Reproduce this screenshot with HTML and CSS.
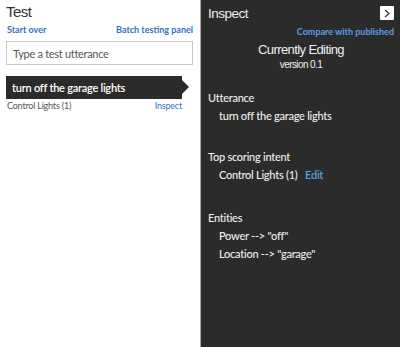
FILE: index.html
```html
<!DOCTYPE html>
<html>
<head>
    <meta charset="UTF-8">
    <title>Test</title>
    <link rel="stylesheet" href="styles.css">
</head>
<body>
    <div class="app">
        <!-- test panel -->
        <div class="test">
            <h1 class="title">Test</h1>
            <div class="links">
                <a href="#">Start over</a>
                <a href="#">Batch testing panel</a>
            </div>
            <input class="utterance-input" type="text" placeholder="Type a test utterance">
            <div class="result">
                <div class="result-bar">turn off the garage lights</div>
                <div class="result-meta">
                    <span>Control Lights (1)</span>
                    <a href="#">Inspect</a>
                </div>
            </div>
        </div>
        <!-- inspect panel -->
        <div class="inspect">
            <div class="inspect-head">
                <h2 class="title">Inspect</h2>
                <button class="close">
                    <svg width="8" height="9" viewBox="0 0 8 9"><path d="M2 1 L6 4.5 L2 8" fill="none" stroke="#333" stroke-width="1.2"/></svg>
                </button>
            </div>
            <div class="compare"><a href="#">Compare with published</a></div>
            <div class="version">
                <div class="version-name">Currently Editing</div>
                <div class="version-num">version 0.1</div>
            </div>
            <div class="section section-utterance">
                <h3>Utterance</h3>
                <p>turn off the garage lights</p>
            </div>
            <div class="section section-intent">
                <h3>Top scoring intent</h3>
                <p>Control Lights (1) <a href="#" class="edit">Edit</a></p>
            </div>
            <div class="section section-entities">
                <h3>Entities</h3>
                <p>Power --&gt; "off"</p>
                <p>Location --&gt; "garage"</p>
            </div>
        </div>
    </div>
</body>
</html>
```

FILE: styles.css
```css
* {
    box-sizing: border-box;
}

body {
    margin: 0;
    background-color: #FFF;
    font-family: Lato, "Open Sans", sans-serif;
    color: #333;
}

a {
    text-decoration: none;
}

.app {
    display: flex;
    width: 400px;
    height: 347px;
}

/* test panel */

.test {
    width: 200px;
    padding: 3px 7px 0 6px;
}
.test .title {
    margin: 0;
    font-family: "Liberation Sans", sans-serif;
    font-size: 15px;
    font-weight: normal;
    letter-spacing: -0.5px;
    line-height: 17px;
    color: #333;
}
.links {
    display: flex;
    justify-content: space-between;
    margin-top: 4px;
    padding-left: 1px;
    font-size: 9px;
    font-weight: bold;
    line-height: 12px;
}
.links a,
.result-meta a {
    color: #2F72C2;
}
.utterance-input {
    display: block;
    width: 187px;
    height: 24px;
    margin-top: 5px;
    padding: 0 6px;
    border: 1px solid #C8C8C8;
    font-family: inherit;
    font-size: 11px;
    letter-spacing: -0.3px;
    color: #333;
    outline: none;
}
.utterance-input::placeholder {
    color: #555;
}
.result {
    margin-top: 11px;
    width: 176px;
}
.result-bar {
    position: relative;
    height: 23px;
    padding-left: 6px;
    background-color: #2B2B2B;
    color: #FFF;
    font-size: 11px;
    font-weight: 600;
    letter-spacing: -0.25px;
    line-height: 23px;
}
.result-bar::after {
    content: "";
    position: absolute;
    top: 4px;
    right: -7px;
    border-top: 7.5px solid transparent;
    border-bottom: 7.5px solid transparent;
    border-left: 7px solid #2B2B2B;
}
.result-meta {
    display: flex;
    justify-content: space-between;
    padding-left: 1px;
    font-size: 9px;
    letter-spacing: -0.2px;
    line-height: 14px;
    color: #555;
}

/* inspect panel */

.inspect {
    width: 200px;
    border-left: 1px solid #A8A8A8;
    background-color: #2B2B2B;
    color: #EEE;
    padding: 0 6px 0 7px;
}
.inspect-head {
    display: flex;
    justify-content: space-between;
    align-items: center;
    height: 26px;
    padding-top: 1px;
}
.inspect .title {
    margin: 0;
    font-family: "Liberation Sans", sans-serif;
    font-size: 13.5px;
    font-weight: normal;
    letter-spacing: -0.5px;
    color: #EEE;
}
.close {
    width: 14px;
    height: 14px;
    padding: 0;
    margin-top: -1px;
    border: none;
    border-radius: 1px;
    background-color: #FFF;
    display: flex;
    align-items: center;
    justify-content: center;
}
.compare {
    text-align: right;
    font-size: 9px;
    font-weight: bold;
    line-height: 12px;
}
.compare a {
    color: #5A9FE0;
}
.version {
    margin-top: 3px;
    text-align: center;
    font-family: "Liberation Sans", sans-serif;
    letter-spacing: -0.6px;
}
.version-name {
    font-size: 13px;
    line-height: 17px;
}
.version-num {
    font-size: 10px;
    line-height: 13px;
}
.section {
    letter-spacing: -0.25px;
}
.section-utterance {
    margin-top: 20px;
}
.section-intent {
    margin-top: 27px;
}
.section-entities {
    margin-top: 29px;
}
.section h3 {
    margin: 0 0 4px;
    font-size: 11px;
    font-weight: 500;
    line-height: 14px;
}
.section p {
    margin: 0 0 4px 11px;
    font-size: 11px;
    font-weight: 500;
    line-height: 14px;
}
.edit {
    margin-left: 5px;
    font-weight: 600;
    color: #5A9FE0;
}
```
